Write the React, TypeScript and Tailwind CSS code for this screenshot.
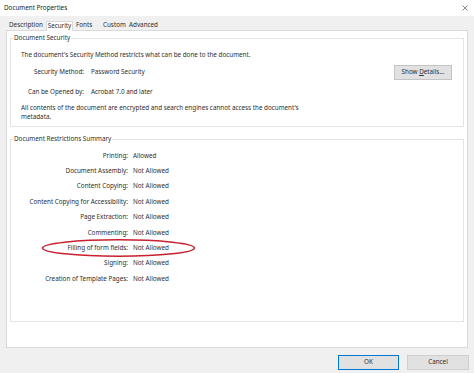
import React from "react";

const restrictions = [
  ["Printing:", "Allowed"],
  ["Document Assembly:", "Not Allowed"],
  ["Content Copying:", "Not Allowed"],
  ["Content Copying for Accessibility:", "Not Allowed"],
  ["Page Extraction:", "Not Allowed"],
  ["Commenting:", "Not Allowed"],
  ["Filling of form fields:", "Not Allowed"],
  ["Signing:", "Not Allowed"],
  ["Creation of Template Pages:", "Not Allowed"],
];

const App = () => {
  return (
    <div className="relative w-[474px] h-[373px] bg-[#f0f0f0] flex flex-col font-['Noto_Sans',sans-serif] text-[6.3px] text-[#2e2e2e] leading-none overflow-hidden">
      {/* title bar */}
      <div className="h-[16px] bg-white flex items-center justify-between pl-[4px] pr-[6px] text-[#222]">
        <span>Document Properties</span>
        <svg width="6" height="6" viewBox="0 0 6 6" className="text-[#555]">
          <path d="M0.5 0.5L5.5 5.5M5.5 0.5L0.5 5.5" stroke="currentColor" strokeWidth="0.7" />
        </svg>
      </div>

      {/* tabs */}
      <div className="h-[14px] pt-[5px] flex items-end relative z-10">
        <div className="ml-[9px] w-[37px] h-[9px] flex items-center">Description</div>
        <div className="w-[27px] h-[10px] -mb-px bg-white border border-b-0 border-[#d9d9d9] flex items-center justify-center">
          Security
        </div>
        <div className="w-[27px] h-[9px] pl-[3px] flex items-center">Fonts</div>
        <div className="w-[27px] h-[9px] pl-[3px] flex items-center">Custom</div>
        <div className="h-[9px] pl-[2px] flex items-center">Advanced</div>
      </div>

      {/* tab panel */}
      <div className="mx-[6px] h-[318px] bg-white border border-[#dadada] px-[3px]">
        {/* Document Security group */}
        <div className="relative mt-[7px] h-[89px] border border-[#e3e3e3] pt-[11px]">
          <span className="absolute -top-[4px] left-[2px] px-[1px] bg-white">Document Security</span>
          <div className="h-[10px] flex items-center pl-[10px]">
            The document's Security Method restricts what can be done to the document.
          </div>
          <div className="mt-[5px] h-[15px] flex items-center">
            <span className="w-[73px] text-right">Security Method:</span>
            <span className="ml-[7px]">Password Security</span>
            <button className="ml-auto mr-[11px] w-[58px] h-[15px] bg-[#e1e1e1] border border-[#c4c4c4] text-[#2e2e2e]">
              Show <span className="underline">D</span>etails...
            </button>
          </div>
          <div className="mt-[7px] h-[10px] flex items-center">
            <span className="w-[73px] text-right">Can be Opened by:</span>
            <span className="ml-[7px]">Acrobat 7.0 and later</span>
          </div>
          <p className="mt-[6px] pl-[10px] leading-[9px] w-[300px]">
            All contents of the document are encrypted and search engines cannot access the document's metadata.
          </p>
        </div>

        {/* Restrictions group */}
        <div className="relative mt-[12px] h-[183px] border border-[#e3e3e3] pt-[8px]">
          <span className="absolute -top-[4px] left-[2px] px-[1px] bg-white">Document Restrictions Summary</span>
          {restrictions.map(([label, value]) => (
            <div key={label} className="h-[15.4px] flex items-center">
              <span className="w-[117px] text-right">{label}</span>
              <span className="ml-[5px]">{value}</span>
            </div>
          ))}
        </div>
      </div>

      {/* footer buttons */}
      <div className="mt-[7px] flex justify-end gap-[8px] pr-[5px]">
        <button className="w-[61px] h-[15px] bg-[#e1e1e1] border border-[#0078d7] text-[#2e2e2e]">OK</button>
        <button className="w-[62px] h-[15px] bg-[#e1e1e1] border border-[#cfcfcf] text-[#2e2e2e]">Cancel</button>
      </div>

      {/* red annotation ellipse */}
      <svg className="absolute left-[40px] top-[237px]" width="158" height="22" viewBox="0 0 158 22">
        <ellipse cx="78.5" cy="11" rx="76" ry="8.3" fill="none" stroke="#c8202f" strokeWidth="1.5" />
      </svg>
    </div>
  );
};

export default App;
